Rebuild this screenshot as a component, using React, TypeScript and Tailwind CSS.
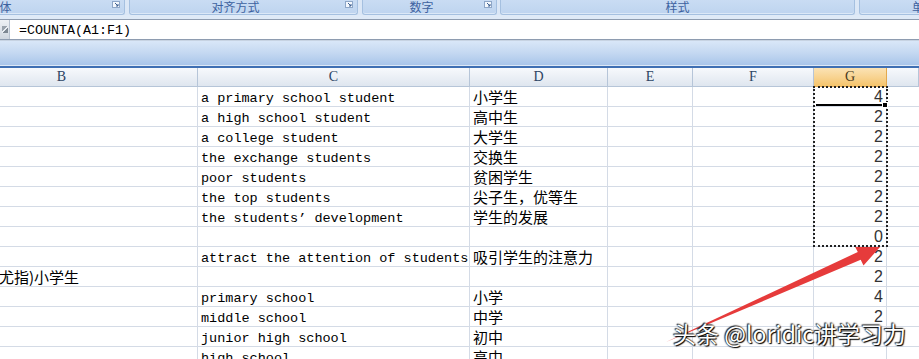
import React from "react";

type Row = { b?: string; c?: string; d?: string; g?: string };

const rows: Row[] = [
  { c: "a primary school student", d: "小学生", g: "4" },
  { c: "a high school student", d: "高中生", g: "2" },
  { c: "a college student", d: "大学生", g: "2" },
  { c: "the exchange students", d: "交换生", g: "2" },
  { c: "poor students", d: "贫困学生", g: "2" },
  { c: "the top students", d: "尖子生，优等生", g: "2" },
  { c: "the students’ development", d: "学生的发展", g: "2" },
  { g: "0" },
  { c: "attract the attention of students", d: "吸引学生的注意力", g: "2" },
  { b: "尤指)小学生", g: "2" },
  { c: "primary school", d: "小学", g: "4" },
  { c: "middle school", d: "中学", g: "2" },
  { c: "junior high school", d: "初中" },
  { c: "high school", d: "高中" },
];

const cols = ["B", "C", "D", "E", "F", "G", ""];

const cjk = "font-['Noto_Sans_CJK_SC',sans-serif]";
const mono = "font-['Liberation_Mono','Noto_Sans_CJK_SC',monospace]";

function Launcher() {
  return (
    <svg width="8" height="7" viewBox="0 0 8 7" className="shrink-0">
      <rect x="0.5" y="0.5" width="7" height="6" fill="#f4f8fd" stroke="#8ea7c8" />
      <path d="M3 2 L6 5 M6 3 V5 H4" stroke="#3d5f8f" strokeWidth="1" fill="none" />
    </svg>
  );
}

function RibbonGroup({
  label,
  className,
  launcher,
}: {
  label: string;
  className: string;
  launcher?: boolean;
}) {
  return (
    <div
      className={`flex h-[15px] shrink-0 items-start rounded-b-[3px] border border-t-0 border-[#a5c0e0] bg-gradient-to-b from-[#c9dcf3] to-[#bed4ef] shadow-[inset_0_-1px_0_#dbe8f7] ${className}`}
    >
      <div
        className={`flex-1 text-center text-[12px] leading-[13px] text-[#3d62a0] ${cjk}`}
      >
        {label}
      </div>
      {launcher && (
        <div className="flex w-[16px] justify-center pt-[1px]">
          <Launcher />
        </div>
      )}
    </div>
  );
}

export default function App() {
  return (
    <div className="relative h-[359px] w-[919px] overflow-hidden bg-white">
      {/* ribbon group labels */}
      <div className="flex h-[15px] gap-[4px] bg-[#dbe7f6]">
        <RibbonGroup label="字体" className="-ml-[110px] w-[235px]" launcher />
        <RibbonGroup label="对齐方式" className="w-[229px]" launcher />
        <RibbonGroup label="数字" className="w-[135px]" launcher />
        <RibbonGroup label="样式" className="-ml-[1px] w-[355px]" />
        <RibbonGroup label="单元格" className="w-[142px]" />
      </div>
      <div className="h-[4px] bg-[#dfeaf7]" />

      {/* formula bar */}
      <div className="flex h-[21px] border-y border-[#8e9cb0] bg-white">
        <div className="flex w-[10px] items-center justify-end border-r border-[#b9c3d0] bg-gradient-to-b from-[#eef1f5] to-[#cfd6df] pr-[1px]">
          <span className="h-[7px] w-[6px] bg-[linear-gradient(135deg,#9aa3ad_0_40%,#e9edf2_40%_60%,#7d8792_60%)]" />
        </div>
        <div
          className={`pl-[9px] pt-[1px] text-[13.33px] leading-[19px] text-black ${mono}`}
        >
          =COUNTA(A1:F1)
        </div>
      </div>

      {/* blue band */}
      <div className="h-[25px] border-t border-[#c7d3e2] bg-gradient-to-b from-[#d9e7f8] via-[#c4d8f1] to-[#a9c5ea]" />
      <div className="h-[1px] bg-[#dde8f6]" />
      <div className="h-[2px] bg-[#3f6fb3]" />

      {/* sheet grid */}
      <div className="-ml-[74px] grid w-[993px] grid-cols-[272px_272px_138px_85px_121px_73px_1fr]">
        {cols.map((c, i) => (
          <div
            key={`h${i}`}
            className={`flex h-[19px] items-center justify-center border-r border-b text-[14px] leading-none font-['Liberation_Serif',serif] ${
              c === "G"
                ? "border-[#e3a94e] bg-gradient-to-b from-[#fbe3b5] to-[#f5c46b] text-[#4a3b1e]"
                : "border-[#b6c5d8] bg-gradient-to-b from-[#f7f9fc] to-[#dfe6ef] text-[#2c4463]"
            }`}
          >
            {c}
          </div>
        ))}
        {rows.map((r, ri) => (
          <React.Fragment key={ri}>
            <div
              className={`h-[20px] overflow-hidden whitespace-nowrap border-r border-b border-[#d4dbe6] pl-[73px] text-[15px] leading-[19px] text-black ${cjk}`}
            >
              {r.b}
            </div>
            <div
              className={`h-[20px] overflow-visible whitespace-nowrap border-r border-b border-[#d4dbe6] pl-[3px] pt-[2px] text-[13.5px] leading-[19px] text-black ${mono}`}
            >
              {r.c}
            </div>
            <div
              className={`relative z-10 h-[20px] whitespace-nowrap border-r border-b border-[#d4dbe6] bg-white pl-[3px] text-[15px] leading-[19px] text-black ${cjk}`}
            >
              {r.d}
            </div>
            <div className="h-[20px] border-r border-b border-[#d4dbe6]" />
            <div className="h-[20px] border-r border-b border-[#d4dbe6]" />
            <div className="h-[20px] border-r border-b border-[#d4dbe6] pr-[3px] text-right font-['Liberation_Sans',sans-serif] text-[16px] leading-[20px] text-[#333]">
              {r.g}
            </div>
            <div className="h-[20px] border-b border-[#d4dbe6]" />
          </React.Fragment>
        ))}
      </div>

      {/* copy selection (marching ants) and active cell */}
      <div className="absolute left-[813px] top-[86px] h-[161px] w-[75px] border-2 border-dotted border-[#222]" />
      <div className="absolute left-[816px] top-[104px] h-[2px] w-[68px] bg-black" />
      <div className="absolute left-[882px] top-[102px] h-[6px] w-[6px] border border-white bg-black" />

      {/* red arrow */}
      <svg
        className="pointer-events-none absolute left-0 top-0"
        width="919"
        height="359"
        viewBox="0 0 919 359"
      >
        <polygon
          points="666,342 857.8,252 855.2,247 880,247 863.5,265.5 860.7,259.8"
          fill="#e63b3b"
        />
      </svg>

      {/* watermark */}
      <div
        className={`absolute left-[673px] top-[322px] whitespace-nowrap text-[23px] leading-[23px] text-white [text-shadow:0_0_2px_#000,1px_1px_1px_#000,-1px_-1px_1px_#333] ${cjk}`}
      >
        头条 @loridic讲学习力
      </div>
    </div>
  );
}
